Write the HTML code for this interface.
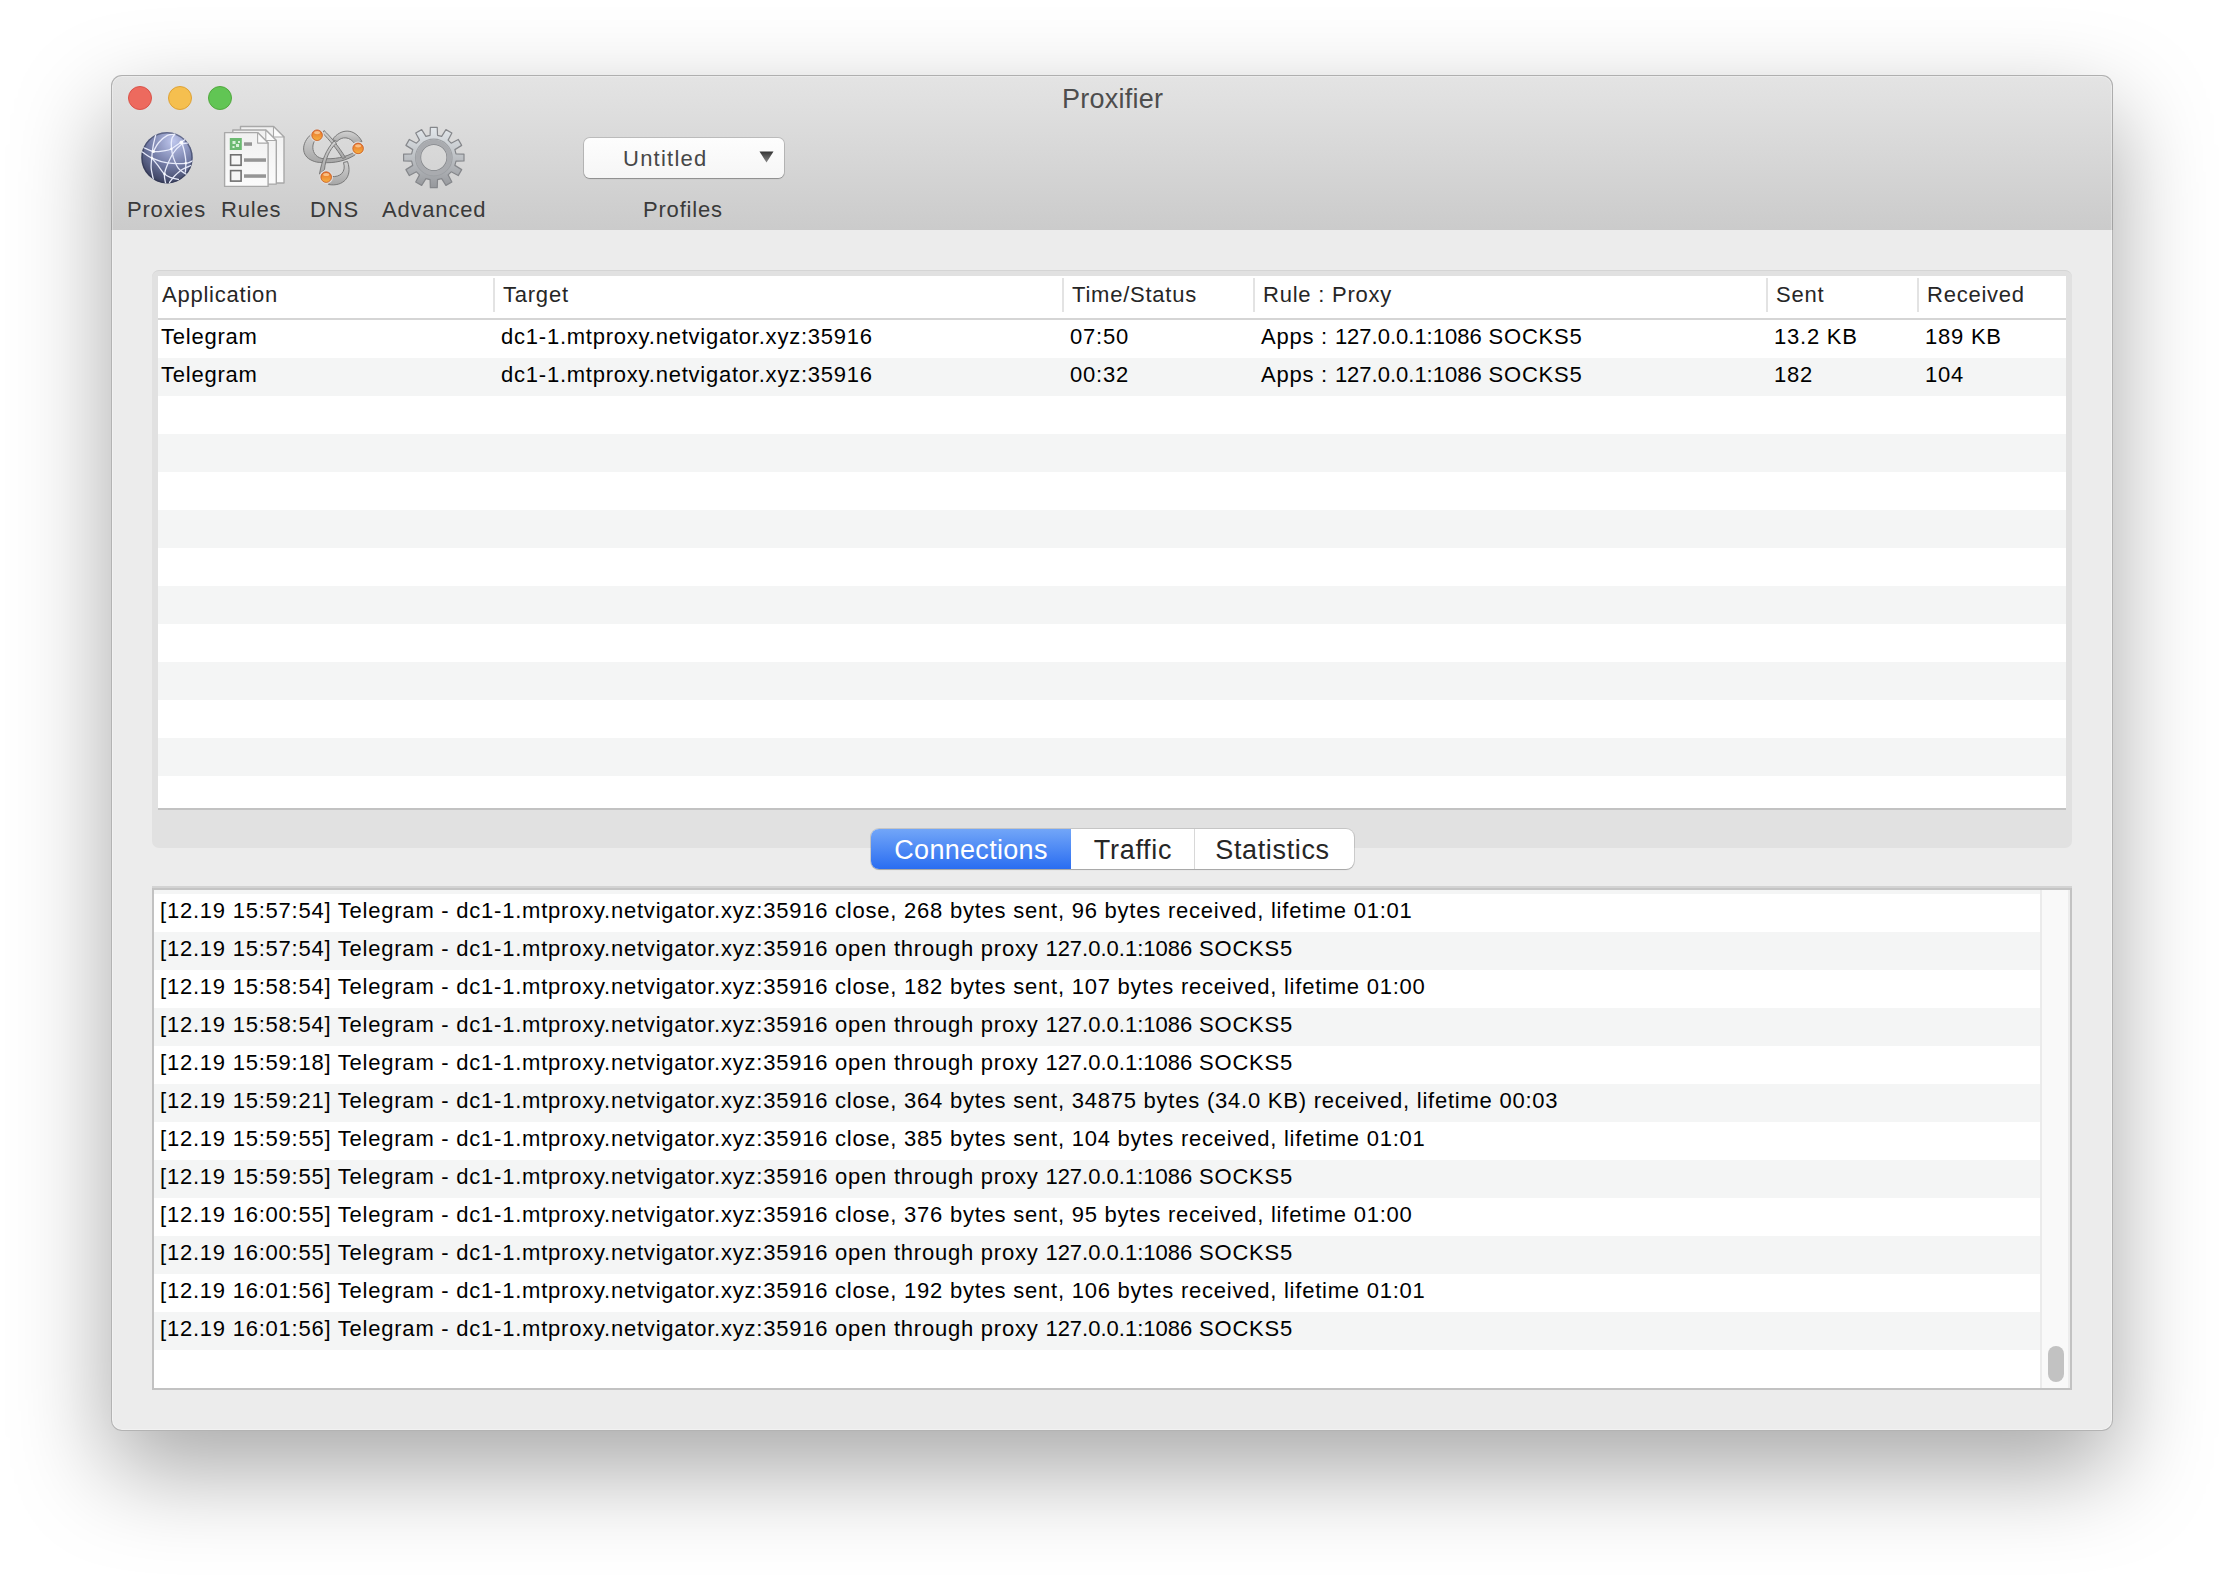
<!DOCTYPE html>
<html><head><meta charset="utf-8">
<style>
*{box-sizing:border-box;margin:0;padding:0}
html,body{width:2224px;height:1578px;overflow:hidden;background:#ffffff}
body{position:relative;font-family:"Liberation Sans",sans-serif;color:#000}
.abs{position:absolute}
#win{position:absolute;left:111px;top:75px;width:2002px;height:1356px;border-radius:11px;
  background:#ececec;overflow:hidden;
  box-shadow:0 38px 95px 2px rgba(0,0,0,0.34);}
#wborder{position:absolute;left:111px;top:75px;width:2002px;height:1356px;border-radius:11px;
  box-shadow:inset 0 0 0 1px rgba(0,0,0,0.26), inset 0 0 0 2px rgba(255,255,255,0.3);z-index:10}
#tb{position:absolute;left:0;top:0;width:2002px;height:155px;
  background:linear-gradient(#e4e4e4,#cbcbcb);}
.light{position:absolute;top:11px;width:24px;height:24px;border-radius:50%}
.title{position:absolute;top:9px;left:951px;font-size:27px;color:#4d4d4d;letter-spacing:0.25px}
.tlab{position:absolute;top:122px;font-size:22px;color:#3a3a3a;letter-spacing:0.8px;white-space:nowrap}
.t22{font-size:22px;letter-spacing:0.77px;white-space:nowrap}
#tbox{position:absolute;left:41px;top:195px;width:1920px;height:578px;background:#e1e1e1;border-radius:7px;border-top:1px solid #d5d5d5}
#tinner{position:absolute;left:6px;top:5px;width:1908px;height:534px;background:#fff;border-bottom:2px solid #c2c2c2;overflow:hidden}
.hdr{position:absolute;left:0;top:0;width:100%;height:44px;border-bottom:2px solid #d5d5d5;background:#fff}
.hc{position:absolute;top:6px;color:#262626}
.hsep{position:absolute;top:2px;width:2px;height:34px;background:#e3e3e3}
.row{position:absolute;left:0;width:100%;height:38px}
.g{background:#f4f5f5}
.cell{position:absolute;top:4px}
#tabs{position:absolute;left:760px;top:754px;width:483px;height:40px;border-radius:8px;background:#fff;
  box-shadow:0 0 0 1px rgba(0,0,0,0.12),0 1px 1px rgba(0,0,0,0.2);overflow:hidden}
.tab{position:absolute;top:0;height:40px;font-size:27px;line-height:42px;text-align:center;color:#262626;letter-spacing:0.3px}
#logbox{position:absolute;left:41px;top:811px;width:1920px;height:504px;background:#fff;border:2px solid #c2c2c2;border-top:4px solid #c4c4c4;overflow:hidden}
.lrow{position:absolute;left:0;width:1886px;height:38px}
.ltxt{position:absolute;left:6px;top:4px}
</style></head><body>
<div id="win">
  <div id="tb">
    <div class="light" style="left:17px;background:#ed6a5e;border:1px solid #d9534a"></div>
    <div class="light" style="left:57px;background:#f5bf4f;border:1px solid #dea236"></div>
    <div class="light" style="left:97px;background:#61c554;border:1px solid #52a83f"></div>
<svg class="abs" style="left:0;top:0" width="2002" height="155" viewBox="111 75 2002 155">
<defs>
 <radialGradient id="gg" cx="0.62" cy="0.18" r="0.95">
  <stop offset="0" stop-color="#bfc7ee"/>
  <stop offset="0.5" stop-color="#737ca6"/>
  <stop offset="1" stop-color="#2a2e48"/>
 </radialGradient>
 <clipPath id="gc"><circle cx="167" cy="157.7" r="25.7"/></clipPath>
 <linearGradient id="gearg" x1="0" y1="0" x2="0" y2="1">
  <stop offset="0" stop-color="#e3e8ec"/>
  <stop offset="1" stop-color="#96989c"/>
 </linearGradient>
 <linearGradient id="ballg" x1="0" y1="0" x2="0" y2="1">
  <stop offset="0" stop-color="#e8702a"/>
  <stop offset="1" stop-color="#f6b040"/>
 </linearGradient>
 <linearGradient id="dnsg" x1="0" y1="0" x2="0" y2="1">
  <stop offset="0" stop-color="#d2d2d2"/>
  <stop offset="1" stop-color="#a6a6a6"/>
 </linearGradient>
 <linearGradient id="pg" x1="0" y1="0" x2="0" y2="1">
  <stop offset="0" stop-color="#f0f0f0"/>
  <stop offset="1" stop-color="#fbfbfb"/>
 </linearGradient>
</defs>
<!-- globe -->
<circle cx="167" cy="157.7" r="25.7" fill="url(#gg)"/>
<circle cx="167" cy="157.7" r="25" fill="none" stroke="#2a2f4a" stroke-width="1.4" opacity="0.5"/>
<g clip-path="url(#gc)" fill="none" stroke="#eef1ff" stroke-width="1.3" stroke-linecap="round" opacity="0.95">
 <path d="M141.0,146.5 C141.4,146.7 141.4,146.7 143.5,147.5 C145.6,148.3 150.0,150.9 153.4,151.5 C156.8,152.1 160.8,151.2 163.7,150.8 C166.6,150.4 168.1,150.5 171.1,149.0 C174.1,147.5 178.8,143.8 181.4,142.0 C184.1,140.2 186.1,138.7 187.0,138.0"/>
 <path d="M141.0,151.5 C141.3,151.6 141.0,151.2 142.8,152.3 C144.6,153.4 147.9,156.3 152.0,158.1 C156.1,159.9 161.8,162.0 167.4,162.9 C173.0,163.8 181.5,163.7 185.8,163.3 C190.1,162.9 191.8,161.0 193.0,160.5"/>
 <path d="M156.0,134.0 C155.9,134.4 155.8,134.4 155.3,136.5 C154.8,138.6 153.7,142.6 153.1,146.4 C152.5,150.2 151.9,155.6 151.6,159.3 C151.3,163.0 150.9,165.0 151.2,168.4 C151.5,171.8 152.8,176.9 153.4,179.5 C154.0,182.1 154.7,183.2 155.0,184.0"/>
 <path d="M153.8,150.8 C154.6,149.5 156.3,145.3 158.6,142.7 C160.9,140.1 164.7,136.8 167.4,135.4 C170.1,134.0 173.6,134.4 174.8,134.2"/>
 <path d="M174.8,134.2 C174.3,135.0 172.4,136.7 171.8,139.0 C171.2,141.3 171.2,145.1 171.5,148.2 C171.8,151.3 172.2,154.0 173.3,157.4 C174.5,160.8 176.3,165.6 178.4,168.4 C180.5,171.2 184.2,172.9 185.8,174.0 C187.4,175.1 187.6,174.8 188.0,175.0"/>
 <path d="M187.5,143.0 C186.5,143.2 183.8,142.8 181.4,144.5 C179.0,146.2 175.6,149.6 173.3,153.0 C171.0,156.4 168.9,161.3 167.4,164.8 C165.9,168.3 164.9,171.2 164.5,174.0 C164.1,176.8 164.9,179.6 165.2,181.3 C165.4,183.0 165.9,183.6 166.0,184.0"/>
 <path d="M152.0,158.1 C152.9,159.2 155.4,162.2 157.5,164.8 C159.6,167.5 162.2,171.9 164.5,174.0 C166.8,176.1 168.8,176.7 171.1,177.6 C173.4,178.5 177.2,179.2 178.4,179.5"/>
 <path d="M169.5,183.0 C169.6,182.8 169.1,182.9 170.0,181.7 C170.9,180.5 172.8,177.8 174.8,175.8 C176.8,173.8 179.4,171.2 182.1,169.5 C184.8,167.8 189.4,166.2 190.9,165.5"/>
 <path d="M181.4,141.6 C181.8,143.0 183.3,146.8 184.0,150.0 C184.7,153.2 185.6,157.4 185.8,161.1 C186.0,164.8 185.5,170.2 185.4,172.0"/>
</g>
<g fill="#ffffff" clip-path="url(#gc)">
 <circle cx="153.4" cy="151.5" r="1.6" opacity="0.9"/>
 <circle cx="152" cy="158.1" r="1.3" opacity="0.8"/>
 <circle cx="181.4" cy="142.3" r="1.9" opacity="0.9"/>
 <circle cx="164.5" cy="174" r="1.3" opacity="0.8"/>
 <circle cx="185.8" cy="163.3" r="1.3" opacity="0.8"/>
 <circle cx="171.3" cy="149" r="1.3" opacity="0.8"/>
</g>
<!-- rules -->
<g stroke="#a8a8a8" stroke-width="1.4" fill="url(#pg)" stroke-linejoin="round">
 <path d="M240.5,126.5 h33 l10.5,10.5 v46 h-43.5 z"/>
 <path d="M232.8,130 h33 l10.5,10.5 v43.6 h-43.5 z"/>
 <path d="M224.6,132.6 h33 l10.5,10.5 v43.3 h-43.5 z"/>
</g>
<g fill="#fbfbfb" stroke="#a8a8a8" stroke-width="1.1" stroke-linejoin="round">
 <path d="M273.5,126.5 v10.5 h10.5 z"/>
 <path d="M265.8,130 v10.5 h10.5 z"/>
 <path d="M257.6,132.6 v10.5 h10.5 z"/>
</g>
<rect x="229.8" y="138" width="12" height="12" fill="#6cba72"/>
<path d="M232.5,141 h3 v3 h-3z M236,144 h3 v3 h-3z M232.5,146 h2 v2 h-2z M238,141 h2 v2 h-2z" fill="#d8f0da"/>
<rect x="230.6" y="154.8" width="10.5" height="10.5" fill="#f6f6f6" stroke="#707070" stroke-width="1.6"/>
<rect x="230.6" y="170.6" width="10.5" height="10.5" fill="#f6f6f6" stroke="#707070" stroke-width="1.6"/>
<rect x="244" y="142.3" width="8" height="3.5" fill="#959595"/>
<rect x="244" y="158.3" width="22" height="3.5" fill="#959595"/>
<rect x="244" y="174.3" width="22" height="3.5" fill="#959595"/>
<!-- dns -->
<g fill="url(#dnsg)" stroke="#7a7a7a" stroke-width="1" stroke-linejoin="round">
 <path d="M311,134.5 C301,143 301,156 312,160.5 C315,162 318,162.5 322,162.5 C334,163.5 347,161 357,153.5 L355.5,151.5 C346,157.5 334,159.5 322,158.5 C315,157 312,151 313,145 C313.5,142 315,140 317,139 Z"/>
 <path d="M332.5,139.5 C340,129 354,127 362,141.5 L355,144 C350,136.5 342,136 337,141.5 Z"/>
 <path d="M324,130.5 C331,137 339,147 345.5,157.5 L342.5,158.5 C337,149 329,139.5 322.5,133 Z"/>
 <path d="M334,141 C326,150 322,160 319.5,174 L324.5,169.5 C325.5,159 329,150 336.5,143 Z"/>
 <path d="M328.5,184.5 C343,187 353,177 347.5,161.5 L343.5,162.5 C346.5,172 340,177.5 331.5,176.5 Z"/>
</g>
<g fill="#dedede">
 <circle cx="317.1" cy="135.2" r="6.8"/>
 <circle cx="358.1" cy="148.4" r="6.8"/>
 <circle cx="326.2" cy="177.1" r="6.8"/>
</g>
<g fill="url(#ballg)" stroke="#c6561e" stroke-width="0.8">
 <circle cx="317.1" cy="135.2" r="5.3"/>
 <circle cx="358.1" cy="148.4" r="5.3"/>
 <circle cx="326.2" cy="177.1" r="5.3"/>
</g>
<g fill="#ffd9a8" opacity="0.7">
 <ellipse cx="317.1" cy="132.6" rx="3" ry="1.6"/>
 <ellipse cx="358.1" cy="145.8" rx="3" ry="1.6"/>
 <ellipse cx="326.2" cy="174.5" rx="3" ry="1.6"/>
</g>
<!-- gear -->
<path d="M430.09,135.31 L430.36,127.30 L437.24,127.30 L437.51,135.31 L441.68,136.42 L445.92,129.62 L451.88,133.06 L448.11,140.14 L451.16,143.19 L458.24,139.42 L461.68,145.38 L454.88,149.62 L455.99,153.79 L464.00,154.06 L464.00,160.94 L455.99,161.21 L454.88,165.38 L461.68,169.62 L458.24,175.58 L451.16,171.81 L448.11,174.86 L451.88,181.94 L445.92,185.38 L441.68,178.58 L437.51,179.69 L437.24,187.70 L430.36,187.70 L430.09,179.69 L425.92,178.58 L421.68,185.38 L415.72,181.94 L419.49,174.86 L416.44,171.81 L409.36,175.58 L405.92,169.62 L412.72,165.38 L411.61,161.21 L403.60,160.94 L403.60,154.06 L411.61,153.79 L412.72,149.62 L405.92,145.38 L409.36,139.42 L416.44,143.19 L419.49,140.14 L415.72,133.06 L421.68,129.62 L425.92,136.42 Z M447.00,157.50 A13.2,13.2 0 1 0 420.60,157.50 A13.2,13.2 0 1 0 447.00,157.50 Z" fill="url(#gearg)" fill-rule="evenodd" stroke="#85878b" stroke-width="1.2" stroke-linejoin="round"/>
<circle cx="433.8" cy="157.5" r="18.3" fill="none" stroke="#9ea1a5" stroke-width="1.2"/>
<circle cx="433.8" cy="157.5" r="15.6" fill="none" stroke="#a9abaf" stroke-width="4.5"/>
</svg>
<div class="abs" style="left:473px;top:63px;width:200px;height:40px;border-radius:6px;background:linear-gradient(#fdfdfd,#f6f6f6);box-shadow:0 0 0 1px rgba(0,0,0,0.14),0 1px 1px rgba(0,0,0,0.22)"></div>
<div class="abs" style="left:512px;top:71px;font-size:22px;color:#474747;letter-spacing:1.25px;white-space:nowrap">Untitled</div>
<svg class="abs" style="left:648px;top:76px" width="15" height="12" viewBox="0 0 15 12"><defs><linearGradient id="ag" x1="0" y1="0" x2="0" y2="1"><stop offset="0" stop-color="#333"/><stop offset="1" stop-color="#888"/></linearGradient></defs><path d="M0.5,0.5 H14.5 L7.5,11.5 Z" fill="url(#ag)"/></svg>
    <div class="title">Proxifier</div>
    <div class="tlab" style="left:16px">Proxies</div>
    <div class="tlab" style="left:110px">Rules</div>
    <div class="tlab" style="left:199px">DNS</div>
    <div class="tlab" style="left:271px">Advanced</div>
    <div class="tlab" style="left:532px">Profiles</div>
  </div>

  <div id="tbox">
    <div id="tinner">
      <div class="hdr">
        <div class="hc t22" style="left:4px">Application</div>
        <div class="hsep" style="left:335px"></div>
        <div class="hc t22" style="left:345px">Target</div>
        <div class="hsep" style="left:904px"></div>
        <div class="hc t22" style="left:914px">Time/Status</div>
        <div class="hsep" style="left:1095px"></div>
        <div class="hc t22" style="left:1105px">Rule : Proxy</div>
        <div class="hsep" style="left:1608px"></div>
        <div class="hc t22" style="left:1618px">Sent</div>
        <div class="hsep" style="left:1759px"></div>
        <div class="hc t22" style="left:1769px">Received</div>
      </div>
<div class="row" style="top:44px"><div class="cell t22" style="left:3px">Telegram</div><div class="cell t22" style="left:343px">dc1-1.mtproxy.netvigator.xyz:35916</div><div class="cell t22" style="left:912px">07:50</div><div class="cell t22" style="left:1103px">Apps : <span style="letter-spacing:0">127.0.0.1:1086</span> SOCKS5</div><div class="cell t22" style="left:1616px">13.2 KB</div><div class="cell t22" style="left:1767px">189 KB</div></div>
<div class="row g" style="top:82px"><div class="cell t22" style="left:3px">Telegram</div><div class="cell t22" style="left:343px">dc1-1.mtproxy.netvigator.xyz:35916</div><div class="cell t22" style="left:912px">00:32</div><div class="cell t22" style="left:1103px">Apps : <span style="letter-spacing:0">127.0.0.1:1086</span> SOCKS5</div><div class="cell t22" style="left:1616px">182</div><div class="cell t22" style="left:1767px">104</div></div>
<div class="row" style="top:120px"></div>
<div class="row g" style="top:158px"></div>
<div class="row" style="top:196px"></div>
<div class="row g" style="top:234px"></div>
<div class="row" style="top:272px"></div>
<div class="row g" style="top:310px"></div>
<div class="row" style="top:348px"></div>
<div class="row g" style="top:386px"></div>
<div class="row" style="top:424px"></div>
<div class="row g" style="top:462px"></div>
<div class="row" style="top:500px"></div>
    </div>
  </div>

  <div id="tabs">
    <div class="tab" style="left:0;width:200px;background:linear-gradient(#72a6f8,#2a6df1);color:#fff">Connections</div>
    <div class="tab" style="left:200px;width:124px;letter-spacing:0.7px">Traffic</div>
    <div class="abs" style="left:323px;top:0;width:1px;height:40px;background:#d8d8d8"></div>
    <div class="tab" style="left:322px;width:159px;letter-spacing:0.65px">Statistics</div>
  </div>

  <div class="abs" style="left:41px;top:811px;width:1920px;height:2px;background:#d3d3d3;z-index:2"></div>
  <div id="logbox">
<div class="lrow g" style="top:-34px"></div>
<div class="lrow" style="top:4px"><div class="ltxt t22">[12.19 15:57:54] Telegram - dc1-1.mtproxy.netvigator.xyz:35916 close, 268 bytes sent, 96 bytes received, lifetime 01:01</div></div>
<div class="lrow g" style="top:42px"><div class="ltxt t22">[12.19 15:57:54] Telegram - dc1-1.mtproxy.netvigator.xyz:35916 open through proxy <span style="letter-spacing:0">127.0.0.1:1086</span> SOCKS5</div></div>
<div class="lrow" style="top:80px"><div class="ltxt t22">[12.19 15:58:54] Telegram - dc1-1.mtproxy.netvigator.xyz:35916 close, 182 bytes sent, 107 bytes received, lifetime 01:00</div></div>
<div class="lrow g" style="top:118px"><div class="ltxt t22">[12.19 15:58:54] Telegram - dc1-1.mtproxy.netvigator.xyz:35916 open through proxy <span style="letter-spacing:0">127.0.0.1:1086</span> SOCKS5</div></div>
<div class="lrow" style="top:156px"><div class="ltxt t22">[12.19 15:59:18] Telegram - dc1-1.mtproxy.netvigator.xyz:35916 open through proxy <span style="letter-spacing:0">127.0.0.1:1086</span> SOCKS5</div></div>
<div class="lrow g" style="top:194px"><div class="ltxt t22">[12.19 15:59:21] Telegram - dc1-1.mtproxy.netvigator.xyz:35916 close, 364 bytes sent, 34875 bytes (34.0 KB) received, lifetime 00:03</div></div>
<div class="lrow" style="top:232px"><div class="ltxt t22">[12.19 15:59:55] Telegram - dc1-1.mtproxy.netvigator.xyz:35916 close, 385 bytes sent, 104 bytes received, lifetime 01:01</div></div>
<div class="lrow g" style="top:270px"><div class="ltxt t22">[12.19 15:59:55] Telegram - dc1-1.mtproxy.netvigator.xyz:35916 open through proxy <span style="letter-spacing:0">127.0.0.1:1086</span> SOCKS5</div></div>
<div class="lrow" style="top:308px"><div class="ltxt t22">[12.19 16:00:55] Telegram - dc1-1.mtproxy.netvigator.xyz:35916 close, 376 bytes sent, 95 bytes received, lifetime 01:00</div></div>
<div class="lrow g" style="top:346px"><div class="ltxt t22">[12.19 16:00:55] Telegram - dc1-1.mtproxy.netvigator.xyz:35916 open through proxy <span style="letter-spacing:0">127.0.0.1:1086</span> SOCKS5</div></div>
<div class="lrow" style="top:384px"><div class="ltxt t22">[12.19 16:01:56] Telegram - dc1-1.mtproxy.netvigator.xyz:35916 close, 192 bytes sent, 106 bytes received, lifetime 01:01</div></div>
<div class="lrow g" style="top:422px"><div class="ltxt t22">[12.19 16:01:56] Telegram - dc1-1.mtproxy.netvigator.xyz:35916 open through proxy <span style="letter-spacing:0">127.0.0.1:1086</span> SOCKS5</div></div>
<div class="lrow" style="top:460px"></div>
    <div class="abs" style="left:1886px;top:0;width:2px;height:100%;background:#ebebeb"></div>
    <div class="abs" style="left:1888px;top:0;width:28px;height:100%;background:#f9f9f9;border-right:2px solid #ededed"></div>
    <div class="abs" style="left:1894px;top:456px;width:16px;height:36px;border-radius:8px;background:#c2c2c2"></div>
</div>
</div>
<div id="wborder"></div>
</body></html>
